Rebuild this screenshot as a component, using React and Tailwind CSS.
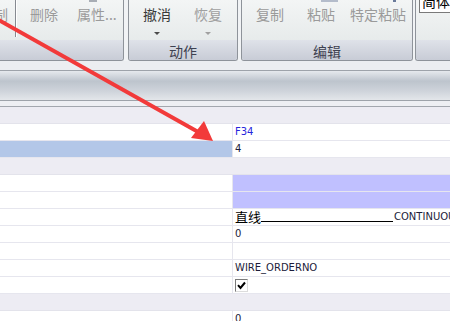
const CJK = "font-['Noto_Sans_CJK_SC','Noto_Sans',sans-serif]";
const LAT = "font-['DejaVu_Sans','Noto_Sans_CJK_SC',sans-serif]";

function Tri({ dark }) {
  return (
    <div
      className={
        "w-0 h-0 border-l-[3px] border-r-[3px] border-t-[3px] border-l-transparent border-r-transparent mt-[10px] " +
        (dark ? "border-t-[#4a4a4a]" : "border-t-[#a0a0a0]")
      }
    />
  );
}

function Panel({ className, children, label }) {
  return (
    <div className={"flex flex-col border-b border-[#8e939a] overflow-hidden " + className}>
      <div className="h-[40px] bg-gradient-to-b from-[#f3f5f5] to-[#e7ebeb] flex relative">{children}</div>
      <div
        className={
          "h-[20px] bg-gradient-to-b from-[#dfe2e9] to-[#c8ccd6] text-center text-[14px] leading-[18px] pt-[2px] text-[#3e4150] " +
          CJK
        }
      >
        {label}
      </div>
    </div>
  );
}

function Row({ type, value, sel }) {
  if (type === "cat") {
    return <div className="h-[17px] bg-[#edecf3] border-b border-[#e3e3eb]" />;
  }
  return (
    <div className="h-[17px] flex border-b border-[#e6e6ee]">
      <div className={"w-[232px] " + (sel ? "bg-[#b3c7e8]" : "bg-white")} />
      <div
        className={
          "flex-1 flex items-center border-l border-[#e6e6ee] pl-[2px] text-[10px] leading-[16px] whitespace-nowrap overflow-hidden " +
          LAT +
          " " +
          (type === "purple" ? "bg-[#c0c0ff]" : "bg-white")
        }
      >
        {value}
      </div>
    </div>
  );
}

export default function App() {
  const btn = "text-[14px] leading-[16px] pt-[6px] whitespace-nowrap " + CJK;
  return (
    <div className="w-[450px] h-[321px] overflow-hidden relative bg-white">
      {/* Ribbon */}
      <div className="flex h-[61px] bg-[#f1f3f5]">
        <Panel className="w-[124px] border-r rounded-br-[3px]" label="">
          <span className={btn + " ml-[-6px] text-[#9a9a9a]"}>制</span>
          <div className="ml-[7px] w-px h-[37px] bg-[#868a91]" />
          <div className="w-px h-[37px] bg-white" />
          <span className={btn + " ml-[13px] text-[#9a9a9a]"}>删除</span>
          <span className={btn + " ml-[19px] text-[#9a9a9a]"}>属性...</span>
          <div className="absolute left-[89px] top-0 w-[8px] h-[2px] bg-[#a8adb5]" />
        </Panel>
        <Panel className="ml-[4px] w-[110px] border-l border-r rounded-b-[3px]" label="动作">
          <div className="ml-[14px] flex flex-col items-center">
            <span className={btn + " text-[#3a3a3a]"}>撤消</span>
            <Tri dark />
          </div>
          <div className="ml-[23px] flex flex-col items-center">
            <span className={btn + " text-[#a0a0a0]"}>恢复</span>
            <Tri />
          </div>
        </Panel>
        <Panel className="ml-[3px] w-[172px] border-l border-r rounded-b-[3px]" label="编辑">
          <span className={btn + " ml-[14px] text-[#9a9a9a]"}>复制</span>
          <span className={btn + " ml-[23px] text-[#9a9a9a]"}>粘贴</span>
          <span className={btn + " ml-[15px] text-[#9a9a9a]"}>特定粘贴</span>
          <div className="absolute left-[79px] top-0 w-[17px] h-[2px] bg-[#b4bccb]" />
          <div className="absolute left-[151px] top-0 w-[3px] h-[2px] bg-[#6a7a9a]" />
        </Panel>
        <Panel className="ml-[2px] flex-1 border-l rounded-bl-[3px]" label="">
          <div className="ml-[3px] h-[13px] flex-1 bg-white border-l border-b border-[#7a7a7a] overflow-hidden">
            <div className={"text-[14px] leading-[16px] mt-[-7px] pl-[2px] text-black whitespace-nowrap " + CJK}>
              简体中文
            </div>
          </div>
        </Panel>
      </div>
      {/* Below ribbon */}
      <div className="h-[9px] bg-[#eceef1]" />
      <div className="h-[31px] border-t border-b border-[#9ea3aa] bg-[linear-gradient(to_bottom,#e6e9ed,#bdc4cd_35%,#cfd4db_70%,#e3e6ea)]" />
      <div className="h-[6px] bg-[#eeeff3] border-b border-[#a3a7ae]" />
      {/* Grid */}
      <div className="flex flex-col">
        <Row type="cat" />
        <Row value={<span className="text-[#2626dc]">F34</span>} />
        <Row sel value={<span className="text-[#1c1c3a]">4</span>} />
        <Row type="cat" />
        <Row type="purple" />
        <Row type="purple" />
        <Row
          value={
            <>
              <span className={"text-[13px] leading-[16px] text-black " + CJK}>直线</span>
              <div className="w-[132px] h-px bg-black self-start mt-[12px] shrink-0" />
              <span className="ml-[1px] text-[#1c1c3a]">CONTINUOUS</span>
            </>
          }
        />
        <Row value={<span className="text-[#1c1c3a]">0</span>} />
        <Row value={null} />
        <Row value={<span className="text-[#1c1c3a]">WIRE_ORDERNO</span>} />
        <Row
          value={
            <div className="w-[13px] h-[13px] border border-t-[#7a7a7a] border-l-[#7a7a7a] border-b-[#dcdcdc] border-r-[#dcdcdc] bg-white flex items-center justify-center">
              <svg width="9" height="9" viewBox="0 0 9 9">
                <path d="M1 4.2 L3.5 7 L8 1.5" stroke="#000" strokeWidth="2" fill="none" />
              </svg>
            </div>
          }
        />
        <Row type="cat" />
        <Row value={<span className="text-[#1c1c3a]">0</span>} />
      </div>
      {/* Red arrow */}
      <svg className="absolute inset-0 pointer-events-none" width="450" height="321" viewBox="0 0 450 321">
        <line x1="-5" y1="18" x2="200" y2="133" stroke="#f23a3a" strokeWidth="4" />
        <polygon points="213,141 191,138 204,121" fill="#f23a3a" />
      </svg>
    </div>
  );
}
